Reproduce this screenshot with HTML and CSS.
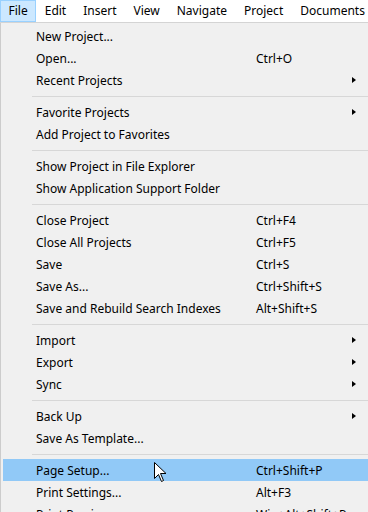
FILE: index.html
```html
<!DOCTYPE html>
<html>
<head>
<meta charset="utf-8">
<link rel="stylesheet" href="styles.css">
</head>
<body>
<div class="menubar">
  <div class="mb-item active">File</div>
  <div class="mb-item">Edit</div>
  <div class="mb-item">Insert</div>
  <div class="mb-item">View</div>
  <div class="mb-item">Navigate</div>
  <div class="mb-item">Project</div>
  <div class="mb-item">Documents</div>
</div>
<div class="menu">
  <div class="row"><span class="label">New Project...</span></div>
  <div class="row"><span class="label">Open...</span><span class="key">Ctrl+O</span></div>
  <div class="row"><span class="label">Recent Projects</span><span class="arrow"></span></div>
  <div class="sep"></div>
  <div class="row"><span class="label">Favorite Projects</span><span class="arrow"></span></div>
  <div class="row"><span class="label">Add Project to Favorites</span></div>
  <div class="sep"></div>
  <div class="row"><span class="label">Show Project in File Explorer</span></div>
  <div class="row"><span class="label">Show Application Support Folder</span></div>
  <div class="sep"></div>
  <div class="row"><span class="label">Close Project</span><span class="key">Ctrl+F4</span></div>
  <div class="row"><span class="label">Close All Projects</span><span class="key">Ctrl+F5</span></div>
  <div class="row"><span class="label">Save</span><span class="key">Ctrl+S</span></div>
  <div class="row"><span class="label">Save As...</span><span class="key">Ctrl+Shift+S</span></div>
  <div class="row"><span class="label">Save and Rebuild Search Indexes</span><span class="key">Alt+Shift+S</span></div>
  <div class="sep"></div>
  <div class="row"><span class="label">Import</span><span class="arrow"></span></div>
  <div class="row"><span class="label">Export</span><span class="arrow"></span></div>
  <div class="row"><span class="label">Sync</span><span class="arrow"></span></div>
  <div class="sep"></div>
  <div class="row"><span class="label">Back Up</span><span class="arrow"></span></div>
  <div class="row"><span class="label">Save As Template...</span></div>
  <div class="sep"></div>
  <div class="row hover"><span class="label">Page Setup...</span><span class="key">Ctrl+Shift+P</span>
    <svg class="cursor" width="13" height="20" viewBox="0 0 13 20"><path d="M0.5 0.5 L0.5 16.5 L4.5 12.5 L7.5 19.5 L9.5 18.5 L6.5 11.5 L12 11.5 Z" fill="#fff" stroke="#000" stroke-width="1" stroke-linejoin="miter"/></svg>
  </div>
  <div class="row"><span class="label">Print Settings...</span><span class="key">Alt+F3</span></div>
  <div class="row"><span class="label">Print Preview...</span><span class="key">Win+Alt+Shift+P</span></div>
</div>
</body>
</html>
```
FILE: styles.css
```css
html, body {
  margin: 0;
  padding: 0;
  background: #f0f0f0;
  overflow: hidden;
}
body {
  width: 368px;
  height: 512px;
  font-family: "Noto Sans", "Open Sans", sans-serif;
  font-size: 12px;
  color: #000;
}
.menubar {
  display: flex;
  height: 22px;
  background: #fff;
  border-bottom: 1px solid #d4d4d4;
}
.mb-item {
  box-sizing: border-box;
  height: 22px;
  line-height: 20px;
  padding: 0 7.5px;
  border: 1px solid transparent;
  white-space: nowrap;
}
.mb-item.active {
  background: #cce8ff;
  border-color: #99d1ff;
}
.menu {
  box-sizing: border-box;
  width: 380px;
  height: 489px;
  background: #f0f0f0;
  border-left: 1px solid #cccccc;
  padding: 2px 0 0 2px;
}
.row {
  position: relative;
  display: grid;
  grid-template-columns: 220px 96px 20px;
  align-items: center;
  height: 22px;
  padding-left: 33px;
}
.row.hover {
  background: #91c9f7;
}
.label {
  grid-column: 1;
  white-space: nowrap;
}
.key {
  grid-column: 2;
  white-space: nowrap;
}
.arrow {
  grid-column: 3;
  justify-self: start;
  width: 0;
  height: 0;
  border-top: 3.5px solid transparent;
  border-bottom: 3.5px solid transparent;
  border-left: 4px solid #000;
}
.sep {
  height: 1px;
  margin: 5px 0 4px 29px;
  background: #d7d7d7;
}
.cursor {
  position: absolute;
  left: 151px;
  top: 3px;
}
```
